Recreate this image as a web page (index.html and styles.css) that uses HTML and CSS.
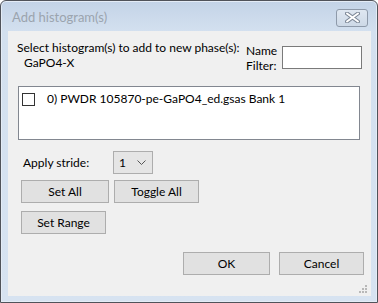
FILE: index.html
```html
<!DOCTYPE html>
<html lang="en">
<head>
    <meta charset="UTF-8">
    <title>Add histogram(s)</title>
    <link rel="stylesheet" href="styles.css">
</head>
<body>
<div class="window">
    <div class="titlebar">
        <span class="title">Add histogram(s)</span>
        <button class="close-btn" aria-label="Close">
            <svg width="15" height="11" viewBox="0 0 15 11">
                <path d="M2 1.5 L13 9.5 M13 1.5 L2 9.5" stroke="#7c8796" stroke-width="4" stroke-linecap="round"/>
                <path d="M2 1.5 L13 9.5 M13 1.5 L2 9.5" stroke="#ffffff" stroke-width="2" stroke-linecap="round"/>
            </svg>
        </button>
    </div>
    <div class="client">
        <div class="header">
            <div class="prompt">
                <p>Select histogram(s) to add to new phase(s):</p>
                <p class="phase">GaPO4-X</p>
            </div>
            <label class="filter-label" for="nameFilter">Name<br>Filter:</label>
            <input type="text" id="nameFilter" class="filter-input">
        </div>

        <div class="listbox">
            <div class="list-item">
                <span class="checkbox"></span>
                <span>0) PWDR 105870-pe-GaPO4_ed.gsas Bank 1</span>
            </div>
        </div>

        <div class="stride-row">
            <span class="stride-label">Apply stride:</span>
            <div class="combo">
                <span>1</span>
                <svg width="9" height="6" viewBox="0 0 9 6">
                    <path d="M0.5 0.5 L4.5 4.5 L8.5 0.5" fill="none" stroke="#555" stroke-width="1"/>
                </svg>
            </div>
        </div>

        <div class="btn-row">
            <button class="btn btn-setall">Set All</button>
            <button class="btn btn-toggle">Toggle All</button>
        </div>
        <div class="btn-row">
            <button class="btn btn-range">Set Range</button>
        </div>

        <div class="footer">
            <button class="btn btn-ok">OK</button>
            <button class="btn btn-cancel">Cancel</button>
        </div>

        <div class="grip">
            <svg width="8" height="8" viewBox="0 0 8 8" fill="#b8b8b8">
                <rect x="6" y="0" width="2" height="2"/>
                <rect x="3" y="3" width="2" height="2"/>
                <rect x="6" y="3" width="2" height="2"/>
                <rect x="0" y="6" width="2" height="2"/>
                <rect x="3" y="6" width="2" height="2"/>
                <rect x="6" y="6" width="2" height="2"/>
            </svg>
        </div>
    </div>
</div>
</body>
</html>
```

FILE: styles.css
```css
* {
    box-sizing: border-box;
    margin: 0;
    padding: 0;
}

body {
    background: #ffffff;
    font-family: Lato, 'Noto Sans', sans-serif;
    font-size: 12px;
    color: #000;
}

.window {
    width: 378px;
    height: 303px;
    border: 1px solid #50535a;
    border-radius: 6px 6px 0 0;
    background: linear-gradient(180deg, #c3d3e7 0px, #d3e0ef 30px, #d7e3f1 100%);
    box-shadow: inset 0 0 0 1px #e4ecf6;
    display: flex;
    flex-direction: column;
}

.titlebar {
    height: 30px;
    display: flex;
    align-items: center;
    justify-content: space-between;
    padding: 0 9px 0 11px;
}

.title {
    color: #9ba4ae;
    font-size: 13px;
    margin-top: 1px;
}

.close-btn {
    width: 32px;
    height: 18px;
    margin-top: 3px;
    border: 1px solid #8e9aaa;
    border-radius: 3px;
    background: linear-gradient(180deg, #dfe7f1, #cdd9e7);
    display: flex;
    align-items: center;
    justify-content: center;
}

.client {
    position: relative;
    flex: 1;
    margin: 0 6px 6px 7px;
    background: #f0f0f0;
    padding: 9px 0 0 0;
}

.header {
    display: flex;
    align-items: flex-start;
    white-space: nowrap;
}

.prompt {
    width: 238px;
    padding-left: 9px;
    line-height: 15px;
}

.phase {
    padding-left: 7px;
}

.filter-label {
    width: 36px;
    line-height: 15px;
    padding-top: 3px;
}

.filter-input {
    width: 80px;
    height: 23px;
    margin-top: 6px;
    border: 1px solid #7a7a7a;
    background: #fff;
    outline: none;
}

.listbox {
    margin: 13px 0 0 10px;
    width: 342px;
    height: 54px;
    border: 1px solid #828790;
    background: #fff;
}

.list-item {
    display: flex;
    align-items: center;
    padding: 4px 0 0 3px;
    line-height: 16px;
}

.checkbox {
    width: 13px;
    height: 13px;
    border: 1px solid #333;
    background: #fff;
    margin-right: 12px;
}

.stride-row {
    display: flex;
    align-items: center;
    margin: 11px 0 0 15px;
}

.stride-label {
    width: 90px;
}

.combo {
    width: 40px;
    height: 23px;
    border: 1px solid #adadad;
    background: #e5e5e5;
    display: flex;
    align-items: center;
    justify-content: space-between;
    padding: 0 6px 0 5px;
}

.btn {
    height: 23px;
    border: 1px solid #adadad;
    background: #e1e1e1;
    font-family: inherit;
    font-size: 12px;
    color: #000;
}

.btn-row {
    display: flex;
    gap: 5px;
    margin: 6px 0 0 13px;
}

.btn-row + .btn-row {
    margin-top: 8px;
}

.btn-setall {
    width: 88px;
}

.btn-toggle,
.btn-range {
    width: 85px;
}

.footer {
    display: flex;
    gap: 9px;
    margin: 18px 0 0 175px;
}

.btn-ok {
    width: 87px;
}

.btn-cancel {
    width: 85px;
}

.grip {
    position: absolute;
    right: 4px;
    bottom: 3px;
    line-height: 0;
}
```
